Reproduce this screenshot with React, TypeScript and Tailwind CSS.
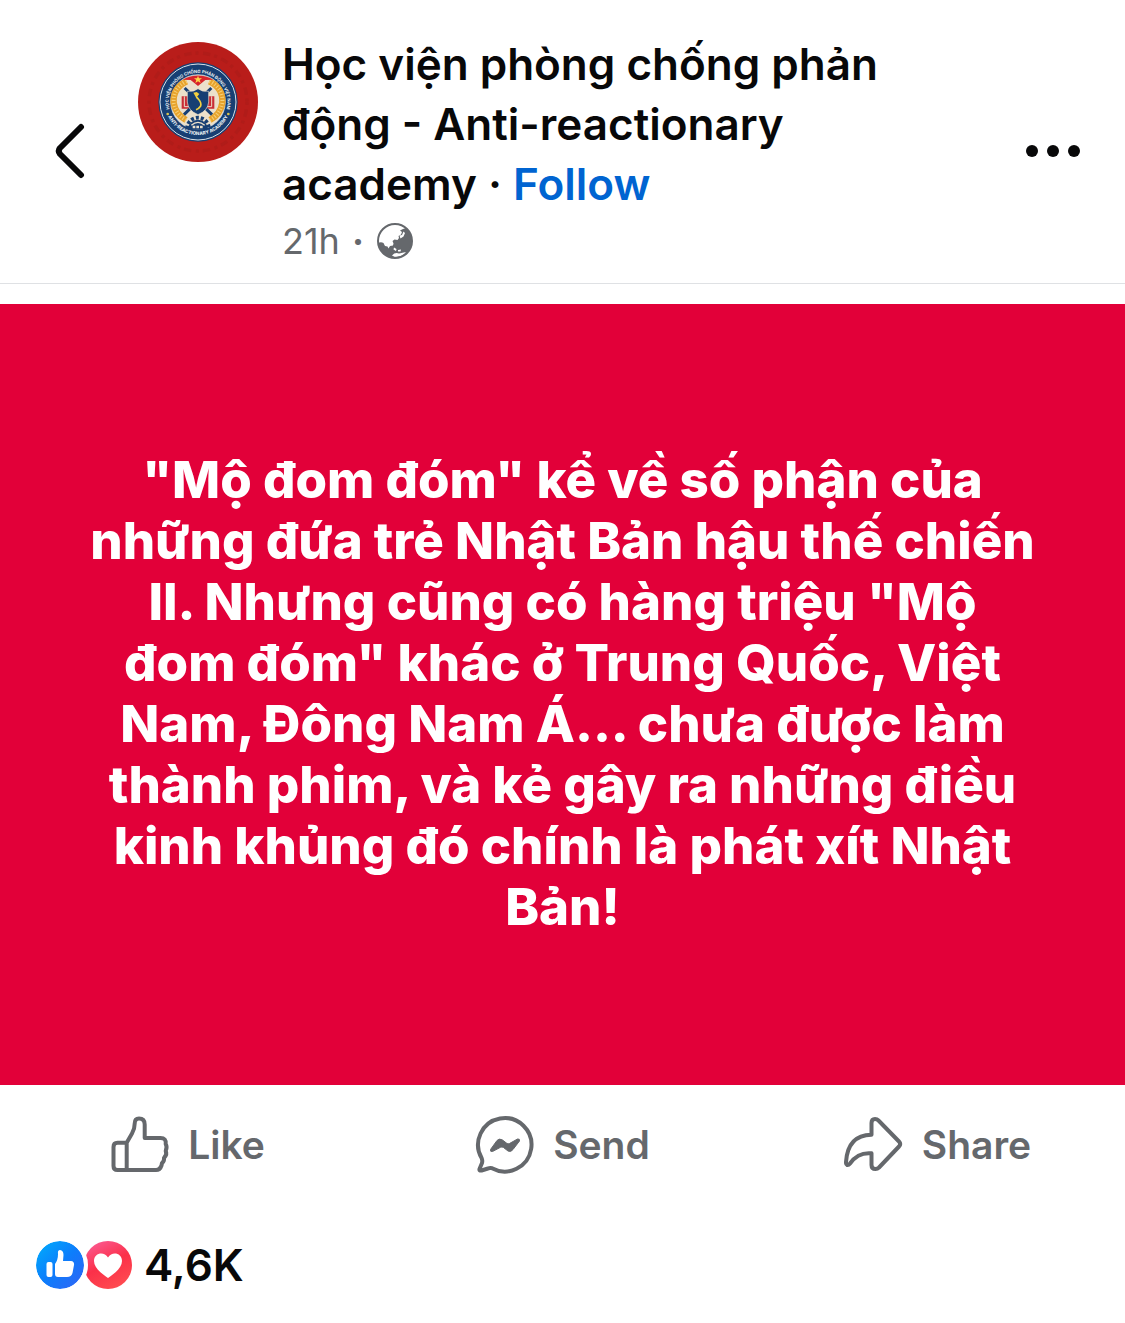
import React from 'react';

const POST_LINES = [
  '"Mộ đom đóm" kể về số phận của',
  'những đứa trẻ Nhật Bản hậu thế chiến',
  'II. Nhưng cũng có hàng triệu "Mộ',
  'đom đóm" khác ở Trung Quốc, Việt',
  'Nam, Đông Nam Á... chưa được làm',
  'thành phim, và kẻ gây ra những điều',
  'kinh khủng đó chính là phát xít Nhật',
  'Bản!',
];

const BackIcon = () => (
  <svg width="32" height="60" viewBox="0 0 32 60" fill="none" stroke="#080809" strokeWidth="6" strokeLinecap="round" strokeLinejoin="round" aria-hidden="true">
    <path d="M27 6 6 27Q3.500 30 6 33L27 54" />
  </svg>
);

const MoreIcon = () => (
  <svg width="56" height="14" viewBox="0 0 56 14" fill="#080809" aria-hidden="true">
    <circle cx="7" cy="7" r="6" />
    <circle cx="28" cy="7" r="6" />
    <circle cx="49" cy="7" r="6" />
  </svg>
);

const GlobeIcon = () => (
  <svg width="38" height="38" viewBox="0 0 38 38" role="img" aria-label="Public">
    <circle cx="19" cy="19" r="17" fill="white" />
    <path fill="#65686c" d="M2 21Q5 19.500 7.500 21L9 24 11.500 24.500 12.500 26.500 14 24 17 23.500 17.500 21.500 16.500 19 18.500 17.500 21.500 18 23 16 22.500 14 25 12.500 26 10 24 8.500 27 7 30 6A17 17 0 0 1 19 36 17 17 0 0 1 2 21Z" />
    <path fill="white" d="M23.500 13.500 26 13 27.500 9.500 29 11 27.500 14.500 24.500 16.500ZM18 25.500 20.500 27 20 29 17.500 27.500ZM22 28 25 27.500 24.500 29.500 22 29.500ZM16 33.500Q19 30 23 31.500L30 30Q27 34.500 21 35 18 35 16 33.500Z" />
    <circle cx="19" cy="19" r="17" fill="none" stroke="#65686c" strokeWidth="2" />
  </svg>
);

const LikeIcon = () => (
  <svg width="60" height="60" viewBox="0 0 60 60" fill="none" stroke="#65686c" strokeWidth="4" strokeLinejoin="round" aria-hidden="true">
    <path d="M16.7 27.7H7.500Q3.500 27.700 3.500 32V51Q3.500 55 7.500 55H46Q50 55 51.500 50.500L52 48Q54.500 46 54 43 57.500 39.500 55.700 36 57.500 32 55.700 29 56.500 23 50.500 23H34.700V9.500Q34.700 3.500 29 3.500 24.700 3.500 24.700 8.500 24.700 14 22 18.500L16.700 27.700V55" />
  </svg>
);

const SendIcon = () => (
  <svg width="60" height="60" viewBox="0 0 60 60" aria-hidden="true">
    <path fill="none" stroke="#65686c" strokeWidth="4" strokeLinejoin="round" d="M17 53.200A26.700 26.700 0 1 0 6.600 43Q7.700 45.500 7 48L4.500 54Q4 56 6.500 55.500L13 53.500Q15 52.500 17 53.200Z" />
    <path fill="#65686c" stroke="#65686c" strokeWidth="1" strokeLinejoin="round" d="M15.500 34.500 22 25.500Q24.500 23 27.500 25L32 28.500Q33 29.200 34.500 28.500L42.500 24Q45 23.500 44.500 26L38 34.500Q36 37.500 33 36L28.500 32.500Q27 31.500 25.500 32.300L17.500 36.500Q15 37 15.500 34.500Z" />
  </svg>
);

const ShareIcon = () => (
  <svg width="60" height="60" viewBox="1 0 60 60" fill="none" stroke="#65686c" strokeWidth="4" strokeLinejoin="round" aria-hidden="true">
    <path d="M28.500 19.700V8Q28.500 4 32 4 34 4 35.500 5.500L56 26.500Q58.500 29 56 31.500L36 52.500Q34.500 54 32.500 54 28.500 54 28.500 50V38.300Q15 37 7 48.500 5.500 50.500 4 50 2.800 49.500 3 47C4 31 11 20 28.500 19.700Z" />
  </svg>
);

const Avatar = () => (
  <svg width="120" height="120" viewBox="-60 -60 360 360" role="img" aria-label="Academy emblem" className="mt-2 shrink-0 self-start">
    <defs>
      <path id="ringTop" d="M36 147A88 88 0 1 1 204 147" />
      <path id="ringBottom" d="M24 147A100 100 0 0 0 216 147" />
    </defs>
    <circle cx="120" cy="120" r="180" fill="#b91d1a" />
    <circle cx="120" cy="120" r="147" fill="none" stroke="#b01c19" strokeWidth="10" strokeDasharray="9 14 22 12" />
    <circle cx="120" cy="120" r="119" fill="#173f73" />
    <circle cx="120" cy="120" r="114" fill="#173f73" stroke="#d9e0e6" strokeWidth="3" />
    <circle cx="120" cy="120" r="82" fill="#ebe0cb" stroke="#d9e0e6" strokeWidth="2" />

    {/* wheat */}
    <path d="M86 58Q44 78 47 122 52 156 84 174" fill="none" stroke="#e7a32c" strokeWidth="19" />
    <path d="M154 58Q196 78 193 122 188 156 156 174" fill="none" stroke="#e7a32c" strokeWidth="19" />
    <path d="M86 58Q44 78 47 122 52 156 84 174M154 58Q196 78 193 122 188 156 156 174" fill="none" stroke="#f7d078" strokeWidth="12" strokeDasharray="3 6" />

    {/* banner and star */}
    <path d="M74 53Q120 28 166 53L142 54 120 72 98 54Z" fill="#d6252c" />
    <path d="m120 41 3 8h9l-7 5 3 9-8-5-8 5 3-9-7-5h9Z" fill="#ffd84a" />

    {/* book, crossed shafts, shield */}
    <path d="M71 103H95V140H71ZM145 103H169V140H145Z" fill="#c92d36" />
    <path d="M79 103V134H95M161 103V134H145" fill="none" stroke="#ebe0cb" strokeWidth="3" />
    <path d="M80 78 162 158M160 78 78 158" stroke="#173f73" strokeWidth="9" />
    <path d="M88 88Q108 90 120 80 132 90 152 88V120Q150 146 120 158 90 146 88 120Z" fill="#173f73" stroke="#ebe0cb" strokeWidth="2" />
    <path d="M106 92 116 90 124 96 119 102 112 103" fill="#f2cf3f" />
    <path d="M115 98Q113 104 121 111 131 122 128 132 123 140 114 143" fill="none" stroke="#f2cf3f" strokeWidth="5" />

    {/* gear */}
    <path d="M87 200A33 33 0 0 1 153 200" fill="none" stroke="#173f73" strokeWidth="11" strokeDasharray="9 6" />
    <path d="M90 203A30 30 0 0 1 150 203Z" fill="#173f73" />
    <path d="M100 190Q120 172 140 190" fill="none" stroke="#ebe0cb" strokeWidth="4" />
    <path d="M104 195h32" stroke="#ebe0cb" strokeWidth="7" strokeDasharray="8 3" />

    <text fill="#e8eef2" fontSize="13" fontWeight="700" textAnchor="middle">
      <textPath href="#ringTop" startOffset="50%">HỌC VIỆN PHÒNG CHỐNG PHẢN ĐỘNG VIỆT NAM</textPath>
    </text>
    <text fill="#e8eef2" fontSize="14" fontWeight="800" textAnchor="middle">
      <textPath href="#ringBottom" startOffset="50%">ANTI-REACTIONARY ACADEMY</textPath>
    </text>
    <circle cx="29" cy="156" r="4" fill="#d9c44e" />
    <circle cx="211" cy="156" r="4" fill="#d9c44e" />
  </svg>
);

const LikeBadge = () => (
  <svg width="48" height="48" viewBox="0 0 48 48" aria-hidden="true" className="relative z-10 rounded-full ring-4 ring-white">
    <defs>
      <linearGradient id="likeFill" x1="0.1" y1="0.1" x2="0.9" y2="0.9">
        <stop offset="0" stopColor="#02a5fc" />
        <stop offset="0.500" stopColor="#0d7dfb" />
        <stop offset="1" stopColor="#2a68f6" />
      </linearGradient>
    </defs>
    <circle cx="24" cy="24" r="24" fill="url(#likeFill)" />
    <rect x="10.500" y="21" width="6" height="15" rx="2" fill="white" />
    <path fill="white" d="M19 23Q22 19 22 13 21.500 9 24 9 27.500 9.500 27.500 14L27 20H35Q38.500 20.500 38 24L36.500 32Q35.500 36 31 36H22Q19 36 19 33Z" />
  </svg>
);

const LoveBadge = () => (
  <svg width="48" height="48" viewBox="0 0 48 48" aria-hidden="true">
    <defs>
      <linearGradient id="loveFill" x1="0.2" y1="0" x2="0.700" y2="1">
        <stop offset="0" stopColor="#fb5a92" />
        <stop offset="0.500" stopColor="#fb3049" />
        <stop offset="1" stopColor="#ff4c50" />
      </linearGradient>
    </defs>
    <circle cx="24" cy="24" r="24" fill="url(#loveFill)" />
    <path fill="white" d="M24 37C18 33 10 27 10 20 10 12 20 10 24 16.500 28 10 38 12 38 20 38 27 30 33 24 37Z" />
  </svg>
);

const actions = [
  { label: 'Like', icon: <LikeIcon /> },
  { label: 'Send', icon: <SendIcon /> },
  { label: 'Share', icon: <ShareIcon /> },
];

const App: React.FC = () => {
  return (
    <main className="min-h-screen bg-white font-[Inter,sans-serif] text-[#080809]">
      <header className="flex items-center border-b border-[#dfe1e4] pt-[34px] pr-11 pb-4 pl-[54px]">
        <button type="button" aria-label="Back" className="mr-[52px] shrink-0">
          <BackIcon />
        </button>
        <Avatar />
        <div className="ml-6 min-w-0 flex-1 pr-16">
          <h1 className="text-[44px] leading-[60px] font-semibold">
            Học viện phòng chống phản động - Anti-reactionary academy ·{' '}
            <a href="#follow" className="text-[#0064d1]">Follow</a>
          </h1>
          <div className="flex h-[53px] items-center text-[36px] text-[#65686c]">
            <span>21h</span>
            <span className="mx-3 font-bold">·</span>
            <GlobeIcon />
          </div>
        </div>
        <button type="button" aria-label="More options" className="shrink-0">
          <MoreIcon />
        </button>
      </header>

      <article className="mt-5 flex min-h-[781px] items-center justify-center bg-[#e20039] px-16 pb-1">
        <p className="text-center text-[51px] leading-[61px] font-extrabold whitespace-pre-line text-white">
          {POST_LINES.join('\n')}
        </p>
      </article>

      <div className="flex h-[120px]">
        {actions.map((action) => (
          <button key={action.label} type="button" className="flex flex-1 items-center justify-center gap-[18px] text-[39px] font-semibold text-[#65686c]">
            {action.icon}
            {action.label}
          </button>
        ))}
      </div>

      <footer className="flex h-[120px] items-center pl-9">
        <LikeBadge />
        <LoveBadge />
        <span className="ml-3 text-[44px] font-semibold">4,6K</span>
      </footer>
    </main>
  );
};

export default App;
